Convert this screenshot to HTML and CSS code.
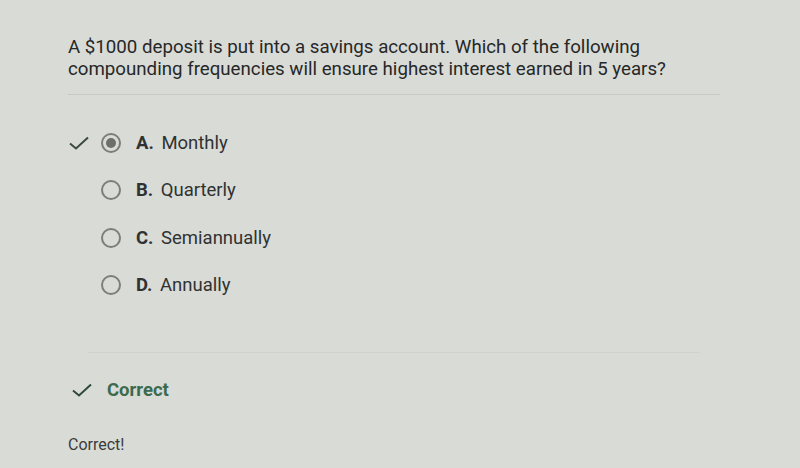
FILE: index.html
```html
<!DOCTYPE html>
<html lang="en">
<head>
  <meta charset="UTF-8" />
  <meta name="viewport" content="width=device-width, initial-scale=1.0" />
  <title>Question</title>
  <link rel="stylesheet" href="styles.css">
</head>
<body>
  <div class="question">
    <p class="prompt">A $1000 deposit is put into a savings account. Which of the following compounding frequencies will ensure highest interest earned in 5 years?</p>
    <hr class="rule">

    <ul class="options">
      <li class="option">
        <span class="mark">
          <svg width="22" height="16" viewBox="0 0 22 16"><path d="M2 8.5 L8 13.5 L20 2.5" fill="none" stroke="#3a4a40" stroke-width="2"/></svg>
        </span>
        <span class="radio checked"></span>
        <span class="label"><b>A.</b> Monthly</span>
      </li>
      <li class="option">
        <span class="mark"></span>
        <span class="radio"></span>
        <span class="label"><b>B.</b> Quarterly</span>
      </li>
      <li class="option">
        <span class="mark"></span>
        <span class="radio"></span>
        <span class="label"><b>C.</b> Semiannually</span>
      </li>
      <li class="option">
        <span class="mark"></span>
        <span class="radio"></span>
        <span class="label"><b>D.</b> Annually</span>
      </li>
    </ul>

    <hr class="rule faint">

    <div class="result">
      <svg width="22" height="16" viewBox="0 0 22 16"><path d="M2 8.5 L8 13.5 L20 2.5" fill="none" stroke="#2f4a3a" stroke-width="2"/></svg>
      <span>Correct</span>
    </div>

    <p class="feedback">Correct!</p>
  </div>
</body>
</html>
```

FILE: styles.css
```css
:root {
  --bg-color: #d9dbd7;
  --text-color: #262827;
  --green: #3b6a4d;
}

body {
  margin: 0;
  background-color: var(--bg-color);
  color: var(--text-color);
  font-family: Roboto, 'Liberation Sans', sans-serif;
}

.question {
  padding: 36px 60px 0 68px;
}

.prompt {
  margin: 0;
  font-size: 18.7px;
  line-height: 22px;
  max-width: 660px;
}

.rule {
  border: none;
  border-top: 1px solid #c6c9c5;
  margin: 14px 0 0 0;
  width: 652px;
}

.options {
  list-style: none;
  margin: 24px 0 0 0;
  padding: 0;
}

.option {
  display: flex;
  align-items: center;
  height: 47.5px;
  font-size: 18.5px;
}

.mark {
  width: 28px;
  display: flex;
  justify-content: flex-start;
}

.radio {
  width: 16px;
  height: 16px;
  border: 2px solid #7b7e7b;
  border-radius: 50%;
  margin-left: 5px;
  display: flex;
  align-items: center;
  justify-content: center;
}

.radio.checked::after {
  content: "";
  width: 10px;
  height: 10px;
  border-radius: 50%;
  background: #6c6f6c;
}

.label {
  margin-left: 15px;
  color: #303231;
}

.label b {
  font-weight: 700;
  margin-right: 3px;
}

.rule.faint {
  border-top-color: #d0d2ce;
  margin-top: 43px;
  margin-left: 20px;
  width: 612px;
}

.result {
  display: flex;
  align-items: center;
  gap: 14px;
  margin-top: 26px;
  padding-left: 3px;
  font-size: 18.5px;
  font-weight: 700;
  color: var(--green);
}

.feedback {
  margin: 34px 0 0 0;
  font-size: 16px;
  color: #3a3c3b;
}
```
